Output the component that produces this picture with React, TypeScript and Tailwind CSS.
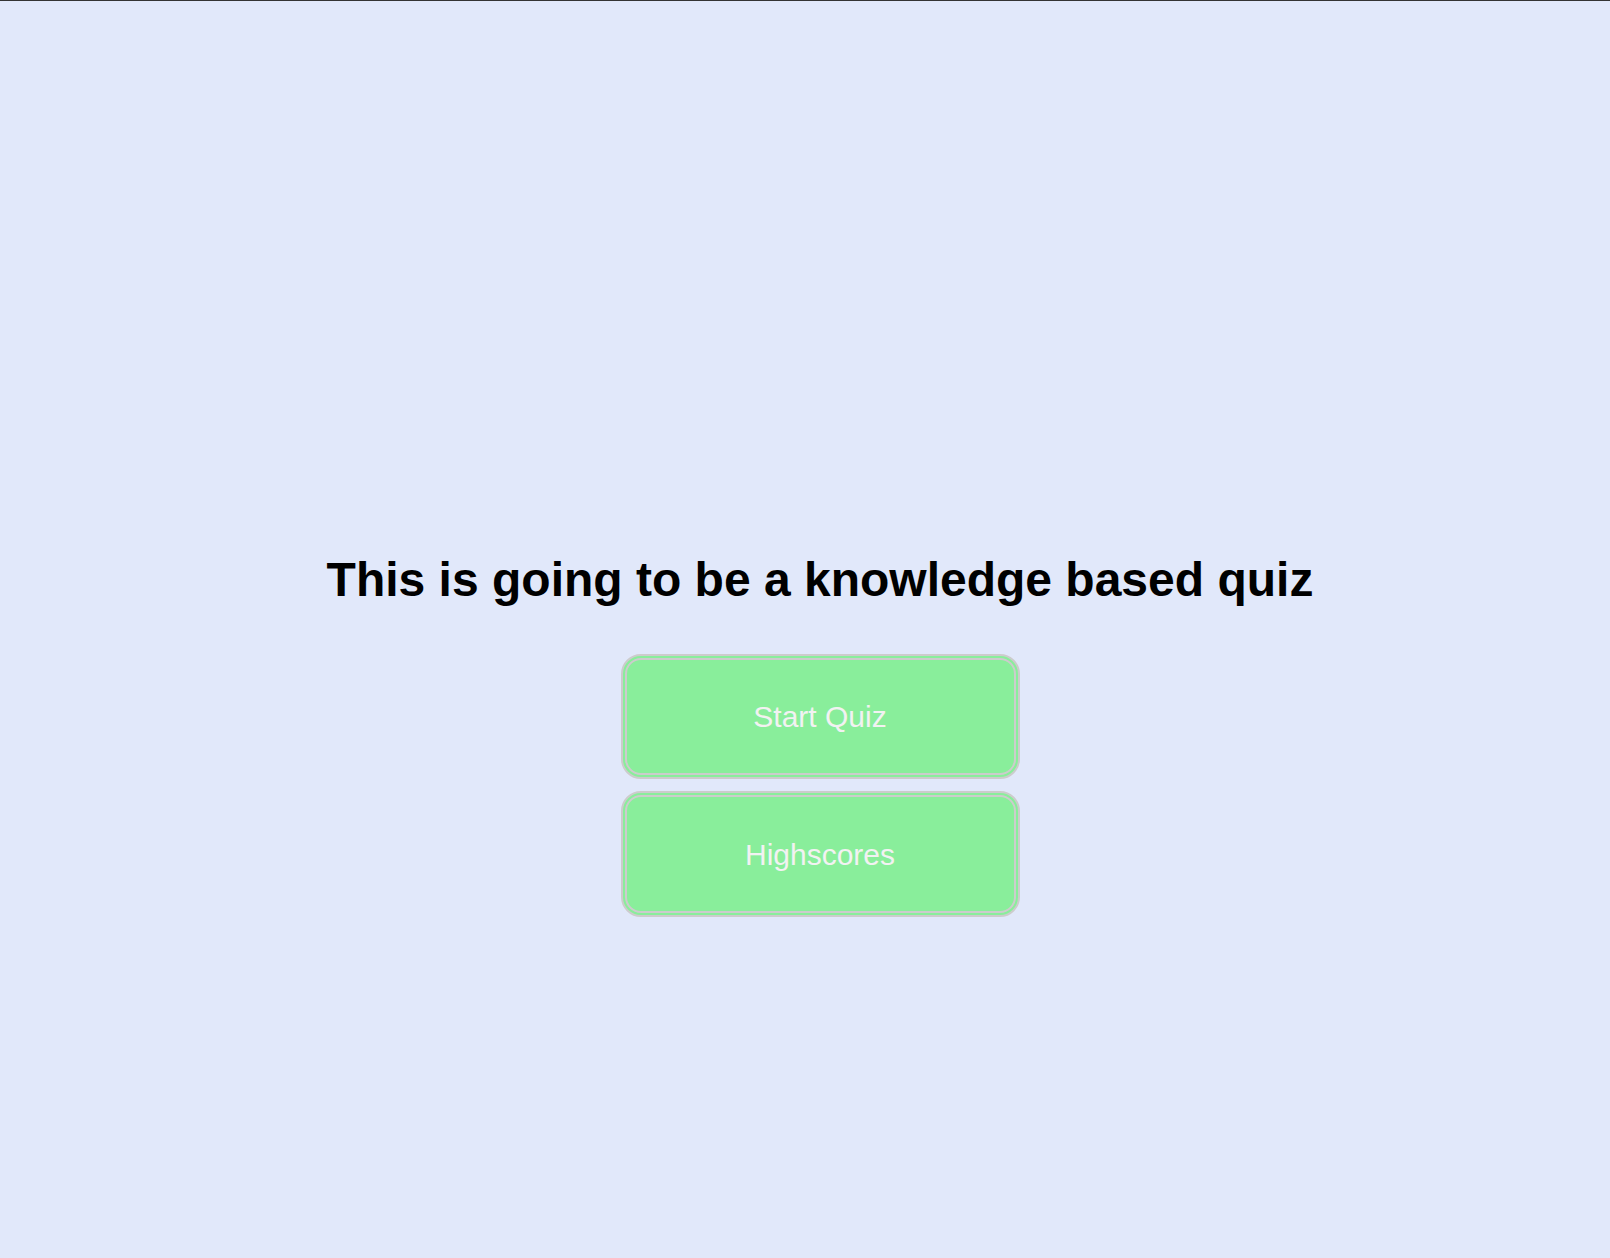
export default function App() {
  return (
    <div
      className="min-h-screen w-full bg-[#e1e8fa] border-t border-[#333333] flex flex-col items-center pl-[30px] pt-[555px]"
      style={{ fontFamily: '"Liberation Sans", Arial, sans-serif' }}
    >
      {/* Intro heading */}
      <h1 className="text-[48px] leading-none font-bold text-black">
        This is going to be a knowledge based quiz
      </h1>

      <div className="mt-[50px] flex flex-col gap-[12px]">
        <button className="w-[399px] h-[125px] rounded-[20px] border-[6px] border-double border-[#cccccc] bg-[#89ee9b] text-[30px] text-[#f2f2f2]">
          Start Quiz
        </button>
        <button className="w-[399px] h-[126px] rounded-[20px] border-[6px] border-double border-[#cccccc] bg-[#89ee9b] text-[30px] text-[#f2f2f2]">
          Highscores
        </button>
      </div>
    </div>
  );
}
